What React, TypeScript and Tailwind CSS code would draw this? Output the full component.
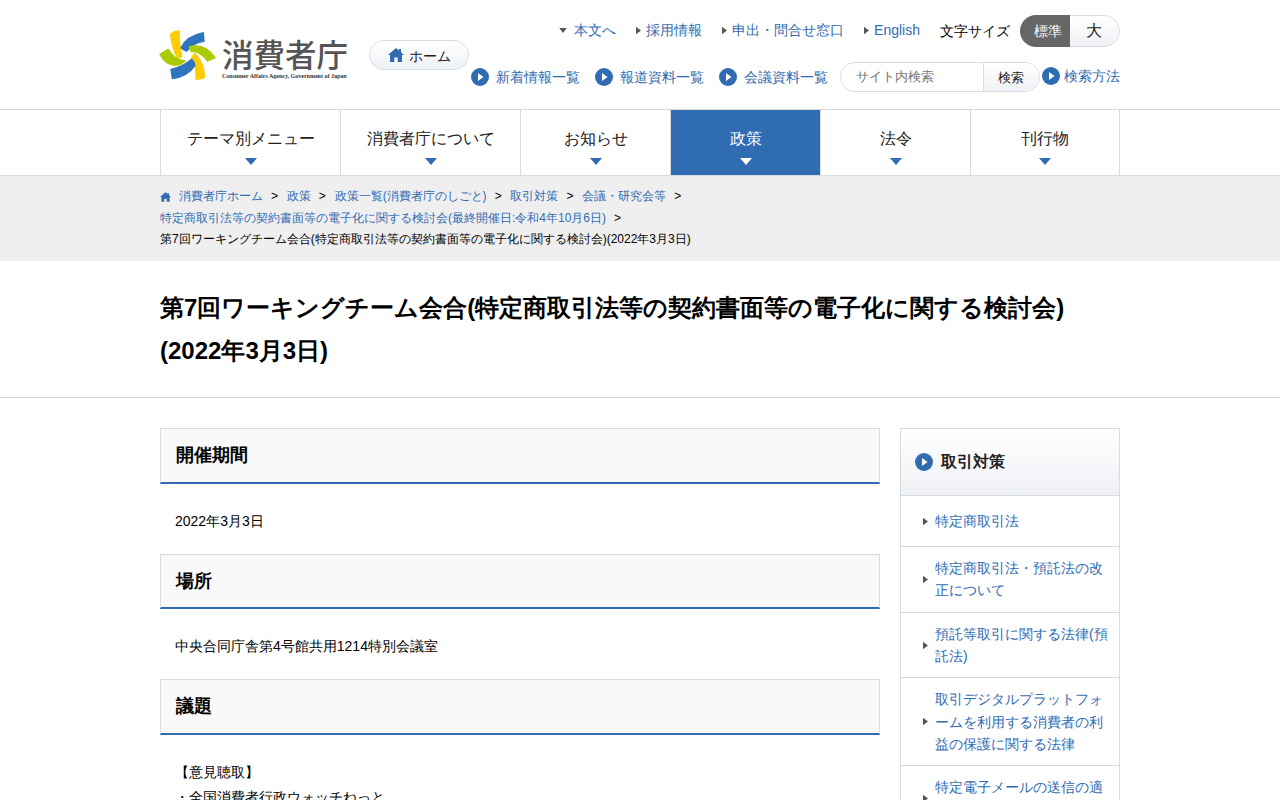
const font = "font-['Liberation_Sans',sans-serif]";

const topLinks = [
  { label: "採用情報" },
  { label: "申出・問合せ窓口" },
  { label: "English" },
];

const listLinks = ["新着情報一覧", "報道資料一覧", "会議資料一覧"];

const navItems = [
  { label: "テーマ別メニュー", width: "w-[181px] border-l" },
  { label: "消費者庁について", width: "w-[180px]" },
  { label: "お知らせ", width: "w-[150px]" },
  { label: "政策", width: "w-[150px]", active: true },
  { label: "法令", width: "w-[150px]" },
  { label: "刊行物", width: "w-[149px]" },
];

const crumbs = [
  "政策",
  "政策一覧(消費者庁のしごと)",
  "取引対策",
  "会議・研究会等",
];

const sideLinks = [
  { lines: "特定商取引法", height: "h-[51px]", nudge: "" },
  { lines: "特定商取引法・預託法の改正について", height: "h-[66px]", nudge: "mb-[0.6px]" },
  { lines: "預託等取引に関する法律(預託法)", height: "h-[65px]", nudge: "" },
  { lines: "取引デジタルプラットフォームを利用する消費者の利益の保護に関する法律", height: "h-[88px]", nudge: "mt-[0.6px]" },
  { lines: "特定電子メールの送信の適正化等に関する法律", height: "h-[66px]", nudge: "" },
];

const RoundArrow = ({ size = "w-[18px] h-[18px]" }: { size?: string }) => (
  <svg viewBox="0 0 18 18" className={`${size} shrink-0`}>
    <circle cx="9" cy="9" r="9" fill="#306cb2" />
    <path d="M7 5 L12.5 9 L7 13 Z" fill="#fff" />
  </svg>
);

const SmallArrow = () => (
  <svg viewBox="0 0 6 9" className="w-[5px] h-[9px] shrink-0">
    <path d="M0 0 L6 4.5 L0 9 Z" fill="#555" />
  </svg>
);

const HomeIcon = ({ className }: { className: string }) => (
  <svg viewBox="0 0 16 14" className={className}>
    <path
      d="M8 0 L11 2.6 V1 H13 V4.3 L16 7 H14 V14 H9.7 V9.5 H6.3 V14 H2 V7 H0 Z"
      fill="#306cb2"
    />
  </svg>
);

const Logo = () => (
  <div className="flex items-start w-[188px] h-[52px]">
    <svg viewBox="0 0 198 174" strokeWidth="4" strokeLinejoin="round" className="w-[66px] h-[58px] shrink-0 -ml-[5px] -mt-[3px]">
      <path d="M47 24 Q60 15 72 15 Q72 55 80 92 L68 96 Q50 65 47 24 Z" fill="#ffcc00" stroke="#ffcc00" />
      <path d="M78 65 Q95 30 145 20 L147 46 Q115 50 95 75 Q85 72 78 65 Z" fill="#2f75bd" stroke="#2f75bd" />
      <path d="M103 62 Q150 50 180 95 L158 105 Q135 75 108 76 Z" fill="#a9cc00" stroke="#a9cc00" />
      <path d="M120 82 Q150 115 148 155 Q135 160 123 160 Q125 120 110 95 Z" fill="#ffcc00" stroke="#ffcc00" />
      <path d="M48 130 Q80 125 110 100 Q118 108 120 118 Q100 150 52 158 Z" fill="#2f75bd" stroke="#2f75bd" />
      <path d="M15 85 L40 70 Q55 100 90 105 Q75 118 60 118 Q30 115 15 85 Z" fill="#a9cc00" stroke="#a9cc00" />
    </svg>
    <div className="ml-[1px] pt-[7px] flex flex-col">
      <span className="font-['Noto_Sans_CJK_JP',sans-serif] text-[31.5px] leading-[34px] text-[#555] font-medium whitespace-nowrap">消費者庁</span>
      <span className="mt-[2px] font-['Liberation_Serif',serif] text-[6px] leading-[8px] font-bold text-[#333] whitespace-nowrap">Consumer Affairs Agency, Government of Japan</span>
    </div>
  </div>
);

const Header = () => (
  <header className="h-[110px] border-b border-[#d9dbe0]">
    <div className="w-[960px] mx-auto flex">
      <div className="pt-[29px]">
        <Logo />
      </div>
      <div className="pt-[40px] ml-[21px]">
        <a className="flex items-center justify-center w-[100px] h-[30px] rounded-[15px] border border-[#d9dde3] bg-gradient-to-b from-white to-[#eef1f5] text-[14px] text-[#222]">
          <HomeIcon className="w-[16px] h-[14px] mr-[5px]" />
          <span className="pt-[2px]">ホーム</span>
        </a>
      </div>
      <div className="flex-1 flex flex-col">
        <div className="flex items-center justify-end h-[32px] mt-[15px] text-[14px]">
          <a className="flex items-center text-[#306cb2] mr-[20px] mb-[2px]">
            <svg viewBox="0 0 9 6" className="w-[8px] h-[5px] mr-[7px]"><path d="M0 0 L9 0 L4.5 6 Z" fill="#555" /></svg>
            本文へ
          </a>
          {topLinks.map((l) => (
            <a key={l.label} className="flex items-center text-[#306cb2] mr-[20px] gap-[5px] mb-[2px]">
              <SmallArrow />
              {l.label}
            </a>
          ))}
          <span className="text-[14px] text-black">文字サイズ</span>
          <div className="flex ml-[10px] h-[32px] w-[100px] rounded-[16px] overflow-hidden">
            <span className="w-[50px] pl-[6px] flex items-center justify-center bg-[#666] text-white text-[14px]">標準</span>
            <span className="w-[50px] pr-[2px] flex items-center justify-center rounded-r-[16px] border border-l-0 border-[#d9dde3] bg-gradient-to-b from-white to-[#eef1f5] text-[16px] text-[#222]">大</span>
          </div>
        </div>
        <div className="flex items-center justify-end mt-[15px] h-[30px] text-[14px]">
          {listLinks.map((l) => (
            <a key={l} className="flex items-center gap-[7px] text-[#306cb2] mr-[15px] whitespace-nowrap">
              <RoundArrow />
              {l}
            </a>
          ))}
          <form className="flex h-[30px] w-[200px] rounded-[15px] border border-[#d9dde3] overflow-hidden mr-[2px] -ml-[3px]">
            <input placeholder="サイト内検索" className="w-[143px] pl-[15px] text-[13.33px] outline-none placeholder:text-[#757575] border-r border-[#d9dde3]" />
            <button type="button" className="flex-1 pt-[2px] pr-[2px] bg-gradient-to-b from-white to-[#eef1f5] text-[13.33px] text-[#222]">検索</button>
          </form>
          <a className="flex items-center gap-[4px] text-[#306cb2] -mt-[2px]">
            <RoundArrow />
            検索方法
          </a>
        </div>
      </div>
    </div>
  </header>
);

const Nav = () => (
  <nav className="border-b border-[#d9dbe0] h-[66px]">
    <ul className="w-[960px] mx-auto flex h-[65px]">
      {navItems.map((n) => (
        <li
          key={n.label}
          className={`${n.width} border-r border-[#d9dbe0] flex flex-col items-center pt-[17px] ${n.active ? "bg-[#306cb2] text-white" : "text-[#222]"}`}
        >
          <span className="text-[16px] leading-[24px] whitespace-nowrap">{n.label}</span>
          <svg viewBox="0 0 12 7" className="w-[12px] h-[7px] mt-[7px]">
            <path d="M0 0 L12 0 L6 7 Z" fill={n.active ? "#fff" : "#306cb2"} />
          </svg>
        </li>
      ))}
    </ul>
  </nav>
);

const Breadcrumb = () => (
  <div className="bg-[#efefef] h-[85px] pt-[10px]">
    <div className="w-[960px] mx-auto text-[12px] leading-[21.6px] text-black">
      <div className="flex items-center">
        <HomeIcon className="w-[11px] h-[10px] mr-[8px]" />
        <a className="text-[#306cb2]">消費者庁ホーム</a>
        {crumbs.map((c) => (
          <span key={c} className="flex items-center">
            <span className="ml-[8px] mr-[8.8px]">&gt;</span>
            <a className="text-[#306cb2]">{c}</a>
          </span>
        ))}
        <span className="ml-[8px]">&gt;</span>
      </div>
      <div>
        <a className="text-[#306cb2]">特定商取引法等の契約書面等の電子化に関する検討会(最終開催日:令和4年10月6日)</a>
        <span className="ml-[8px]">&gt;</span>
      </div>
      <div>第7回ワーキングチーム会合(特定商取引法等の契約書面等の電子化に関する検討会)(2022年3月3日)</div>
    </div>
  </div>
);

const Section = ({ title, children, h }: { title: string; children: React.ReactNode; h: string }) => (
  <section>
    <h2 className={`${h} flex items-center pl-[15px] bg-[#f9f9f9] border border-[#d9dbe0] border-b-2 border-b-[#306cb2] text-[18px] font-bold text-black`}>
      {title}
    </h2>
    {children}
  </section>
);

const Side = () => (
  <aside className="w-[220px] border border-[#d9dbe0] border-b-0 text-[14px]">
    <div className="h-[67px] flex items-center gap-[8px] pl-[14px] border-b border-[#d9dbe0] bg-gradient-to-b from-white to-[#eef1f5]">
      <RoundArrow />
      <span className="text-[16px] font-bold text-[#222]">取引対策</span>
    </div>
    {sideLinks.map((s) => (
      <a key={s.lines} className={`${s.height} flex items-center gap-[7px] pl-[22px] pr-[10px] border-b border-[#d9dbe0] text-[#306cb2] leading-[22.4px]`}>
        <SmallArrow />
        <span className={s.nudge}>{s.lines}</span>
      </a>
    ))}
  </aside>
);

export default function App() {
  return (
    <div lang="ja" className={`${font} h-[800px] overflow-hidden bg-white`}>
      <Header />
      <Nav />
      <Breadcrumb />
      <div className="h-[137px] border-b border-[#d9dbe0] pt-[25px]">
        <h1 className="w-[960px] mx-auto text-[24px] leading-[43px] font-bold text-black">
          第7回ワーキングチーム会合(特定商取引法等の契約書面等の電子化に関する検討会)(2022年3月3日)
        </h1>
      </div>
      <div className="w-[960px] mx-auto flex justify-between pt-[30px]">
        <main className="w-[720px] text-[14px] text-black">
          <Section title="開催期間" h="h-[56px]">
            <p className="px-[15px] pt-[26px] pb-[22px] leading-[22px]">2022年3月3日</p>
          </Section>
          <Section title="場所" h="h-[55px]">
            <p className="px-[15px] pt-[26px] pb-[22px] leading-[22px]">中央合同庁舎第4号館共用1214特別会議室</p>
          </Section>
          <Section title="議題" h="h-[56px]">
            <div className="px-[15px] pt-[25px] leading-[25px]">
              <p>【意見聴取】</p>
              <p>・全国消費者行政ウォッチねっと</p>
            </div>
          </Section>
        </main>
        <Side />
      </div>
    </div>
  );
}
